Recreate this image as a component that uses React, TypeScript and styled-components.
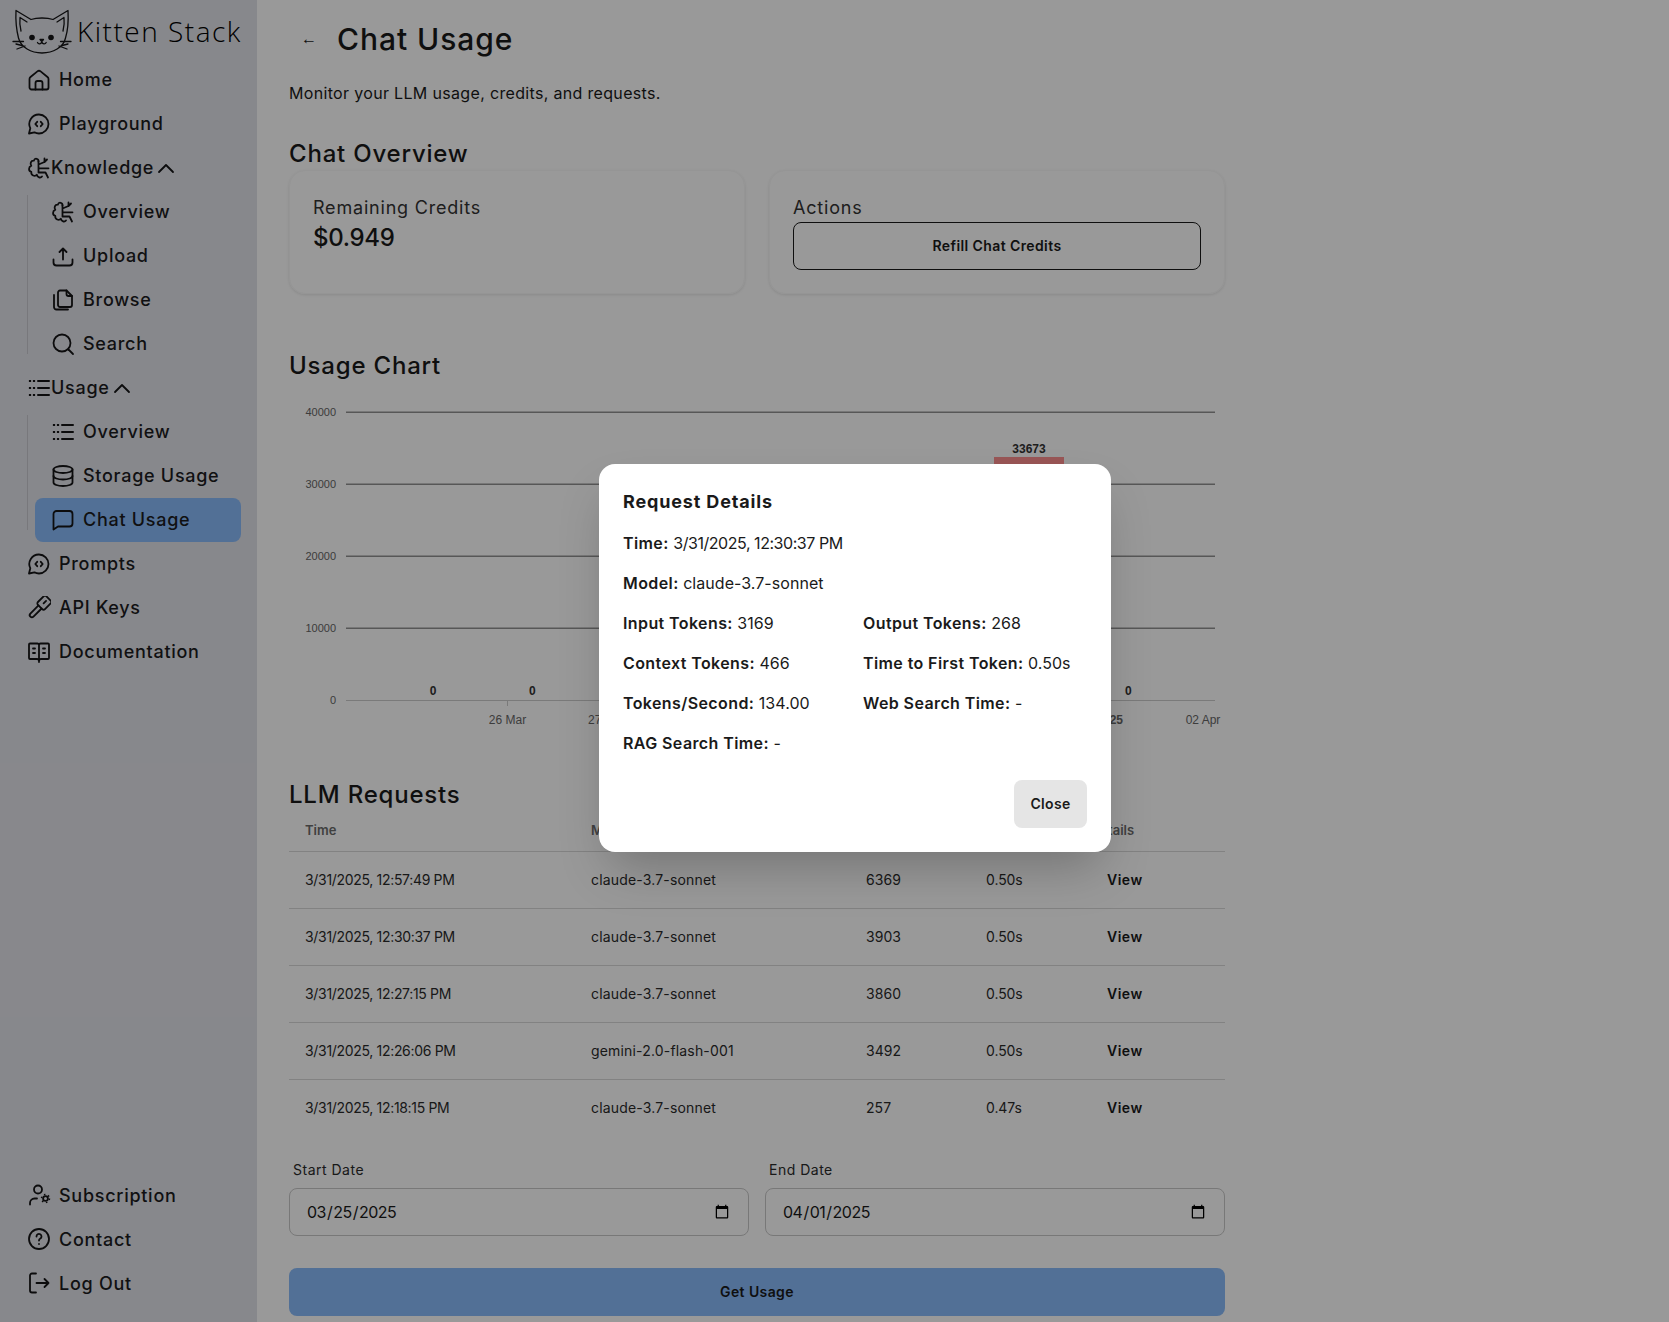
import React from "react";
import styled, { createGlobalStyle } from "styled-components";

const Global = createGlobalStyle`
  html, body { margin: 0; padding: 0; height: 1322px; overflow: hidden; background: #fff; }
  body { font-family: Inter, "Open Sans", "Liberation Sans", sans-serif; color: #1a1a1a; }
  * { box-sizing: border-box; }
`;

const Page = styled.div`
  display: flex;
  position: relative;
  width: 1669px;
  height: 1322px;
  overflow: hidden;
`;
const Sidebar = styled.aside`
  flex: 0 0 257px;
  width: 257px;
  min-width: 0;
  height: 1322px;
  background: #e2e3e9;
  display: flex;
  flex-direction: column;
  justify-content: space-between;
  padding: 0 16px 17px 11px;
`;
const Brand = styled.div`
  display: flex;
  align-items: flex-start;
  gap: 5px;
  height: 57.5px;
  padding: 9px 0 0 1px;
`;
const BrandName = styled.span`
  font-family: "Open Sans", sans-serif;
  font-size: 28px;
  font-weight: 300;
  line-height: 44px;
  letter-spacing: 1.5px;
  white-space: nowrap;
  color: #000;
`;
const NavList = styled.nav`
  display: flex;
  flex-direction: column;
`;
const NavItem = styled.a<{ $active?: boolean }>`
  display: flex;
  align-items: center;
  height: 44px;
  padding-left: 16px;
  gap: 8px;
  border-radius: 8px;
  font-size: 18px;
  font-weight: 500;
  letter-spacing: 0.72px;
  color: #1c1c1e;
  background: ${(p) => (p.$active ? "#89bbfa" : "transparent")};
  white-space: nowrap;
`;
const GroupHead = styled(NavItem)`
  gap: 0;
`;
const SubList = styled.div`
  display: flex;
  flex-direction: column;
  margin-left: 16px;
  padding-left: 8px;
  position: relative;
  &::before {
    content: "";
    position: absolute;
    left: 0;
    top: 5px;
    bottom: 12px;
    width: 1px;
    background: #c8c9cf;
  }
`;
const Main = styled.main`
  flex: 0 0 968px;
  padding: 0 0 0 32px;
`;
const HeaderRow = styled.header`
  display: flex;
  align-items: center;
  gap: 8px;
  height: 40px;
  margin-top: 19px;
`;
const BackButton = styled.button`
  width: 40px;
  height: 40px;
  padding: 0;
  border: 0;
  background: transparent;
  font: 700 16px "Liberation Sans", sans-serif;
  color: #1a1a1a;
  display: flex;
  align-items: center;
  justify-content: center;
`;
const Title = styled.h1`
  margin: 0;
  font-size: 30px;
  font-weight: 500;
  letter-spacing: 0.95px;
  line-height: 36px;
`;
const Subtitle = styled.p`
  margin: 22px 0 0;
  font-size: 16px;
  line-height: 24px;
  letter-spacing: 0.33px;
`;
const SectionTitle = styled.h2<{ $top: number }>`
  margin: ${(p) => p.$top}px 0 0;
  font-size: 24px;
  font-weight: 500;
  line-height: 32px;
  letter-spacing: 0.8px;
`;
const Cards = styled.div`
  display: grid;
  grid-template-columns: 456px 456px;
  gap: 24px;
`;
const Card = styled.section`
  height: 124px;
  padding: 24px 23px;
  border-radius: 16px;
  border: 1px solid #f8f8f8;
  box-shadow: 0 1px 3px rgba(0, 0, 0, 0.1);
`;
const CardLabel = styled.div`
  font-size: 18px;
  line-height: 28px;
  margin-top: -1px;
  letter-spacing: 0.8px;
  color: #333;
`;
const CardValue = styled.div`
  font-size: 24px;
  font-weight: 500;
  line-height: 32px;
  letter-spacing: -0.3px;
`;
const OutlineButton = styled.button`
  display: block;
  width: 408px;
  height: 48px;
  padding: 0 0 2px;
  background: transparent;
  border: 1px solid #1a1a1a;
  border-radius: 8px;
  font-family: inherit;
  font-size: 14px;
  font-weight: 600;
  letter-spacing: 0.4px;
  color: #1a1a1a;
`;
const ChartSvg = styled.svg`
  display: block;
  margin-top: 3px;
  width: 936px;
  height: 360px;
`;
const TickText = styled.text<{ $size?: number }>`
  font-family: "Liberation Sans", sans-serif;
  font-size: ${(p) => p.$size ?? 11}px;
  fill: #666;
`;
const ValueText = styled.text`
  font-family: "Liberation Sans", sans-serif;
  font-size: 12px;
  font-weight: 700;
  fill: #333;
  text-anchor: middle;
`;
const TableEl = styled.table`
  width: 936px;
  table-layout: fixed;
  border-collapse: collapse;
  font-size: 14px;
`;
const HeadCell = styled.th`
  height: 40px;
  padding: 0 16px 2px;
  text-align: left;
  font-size: 13px;
  font-weight: 600;
  letter-spacing: 0;
  color: #6b6b6b;
  border-bottom: 1px solid #d9d9d9;
`;
const Row = styled.tr`
  height: 57px;
  border-bottom: 1px solid #d9d9d9;
  &:last-child { border-bottom: 0; }
`;
const Cell = styled.td<{ $spacing: number }>`
  padding: 0 16px;
  white-space: nowrap;
  letter-spacing: ${(p) => p.$spacing}px;
  color: #2b2b2b;
`;
const ViewCell = styled.td`
  padding: 0 0 0 32px;
`;
const ViewLink = styled.span`
  font-weight: 600;
  letter-spacing: 0.5px;
  color: #1a1a1a;
`;
const DateGrid = styled.div`
  display: grid;
  grid-template-columns: 460px 460px;
  gap: 16px;
  margin-top: 24px;
`;
const Field = styled.label`
  display: flex;
  flex-direction: column;
`;
const FieldLabel = styled.span`
  font-size: 14px;
  line-height: 20px;
  letter-spacing: 0.5px;
  padding-left: 4px;
  margin-bottom: 8px;
  color: #2b2b2b;
`;
const DateInput = styled.input`
  height: 48px;
  padding: 0 16px;
  border: 1px solid #c9c9c9;
  border-radius: 8px;
  background: transparent;
  font-family: inherit;
  font-size: 16px;
  letter-spacing: -0.5px;
  color: #1a1a1a;
`;
const PrimaryButton = styled.button`
  display: block;
  width: 936px;
  height: 48px;
  margin-top: 32px;
  padding: 0 0 2px;
  border: 0;
  border-radius: 8px;
  background: #89bbfa;
  font-family: inherit;
  font-size: 14px;
  font-weight: 600;
  letter-spacing: 0.4px;
  color: #1a1a1a;
`;
const Overlay = styled.div`
  position: absolute;
  inset: 0;
  background: rgba(0, 0, 0, 0.4);
`;
const Modal = styled.div`
  position: absolute;
  left: 599px;
  top: 464px;
  width: 512px;
  height: 388px;
  padding: 24px;
  background: #fff;
  border-radius: 16px;
  box-shadow: 0 25px 50px -12px rgba(0, 0, 0, 0.25);
`;
const ModalTitle = styled.h3`
  margin: 0 0 15px;
  font-size: 18px;
  font-weight: 700;
  line-height: 28px;
  letter-spacing: 0.85px;
`;
const DetailGrid = styled.dl`
  display: grid;
  grid-template-columns: 224px 224px;
  gap: 16px;
  margin: 0;
`;
const Detail = styled.div<{ $wide?: boolean }>`
  grid-column: ${(p) => (p.$wide ? "1 / 3" : "auto")};
  font-size: 16px;
  line-height: 24px;
  white-space: nowrap;
`;
const DetailKey = styled.b`
  font-weight: 600;
  letter-spacing: 0.4px;
`;
const DetailValue = styled.span<{ $tight?: boolean }>`
  letter-spacing: ${(p) => (p.$tight ? "-0.45px" : "0.05px")};
`;
const ModalActions = styled.div`
  display: flex;
  justify-content: flex-end;
  margin-top: 25px;
`;
const CloseButton = styled.button`
  width: 73px;
  height: 48px;
  padding: 0 0 2px;
  border: 0;
  border-radius: 8px;
  background: #e5e5e5;
  font-family: inherit;
  font-size: 14px;
  font-weight: 600;
  letter-spacing: 0.3px;
  color: #1a1a1a;
`;

const IconSvg = styled.svg`
  flex: 0 0 24px;
  width: 24px;
  height: 24px;
  fill: none;
  stroke: #141416;
  stroke-width: 1.8;
  stroke-linecap: round;
  stroke-linejoin: round;
`;
const I = ({ children }: { children: React.ReactNode }) => <IconSvg viewBox="0 0 24 24">{children}</IconSvg>;

const HomeIcon = () => (
  <I>
    <path d="M2.500 19.500V11c0-.8.4-1.500 1-2l6.900-5.600a2.600 2.600 0 0 1 3.200 0L20.500 9c.6.5 1 1.200 1 2v8.500a2 2 0 0 1-2 2h-15a2 2 0 0 1-2-2Z" />
    <path d="M8.500 21.500V15a2 2 0 0 1 2-2h3a2 2 0 0 1 2 2v6.500" />
  </I>
);
const ChatCodeIcon = () => (
  <I>
    <path d="M12 2.500a9.500 9.500 0 0 1 0 19c-1.700 0-3.300-.4-4.600-1.200L2 21.500l1.300-5.300A9.500 9.500 0 0 1 12 2.500Z" />
    <path d="M10.200 9.800 8.300 12l1.900 2.200M13.800 9.800l1.900 2.200-1.900 2.200" />
  </I>
);
const BrainIcon = () => (
  <I>
    <path d="M11.500 5.500C11.800 2.500 7.800 1.500 6.800 4.700 3.800 4.500 2.800 7.800 4.300 9.700 1.300 11 1.300 15.300 4.300 16 3.800 19.500 8 21 9.800 18.800c.7 2.700 3.700 3.500 5.200 1.700" />
    <path d="M11.500 5.500V16.500M11.500 8.500 17.500 6V2.500M20 3.500 17.500 6M11.500 12.300H21.500M11.500 16.500H18.500L21 21.500" />
  </I>
);
const UploadIcon = () => (
  <I>
    <path d="M12 15.500V4.500M8.500 8 12 4.500 15.500 8" />
    <path d="M2.500 15.500v3a3 3 0 0 0 3 3h13a3 3 0 0 0 3-3v-3" />
  </I>
);
const FilesIcon = () => (
  <I>
    <path d="M7 5V4.500a2 2 0 0 1 2-2h6.500L21 8v9a2 2 0 0 1-2 2H9a2 2 0 0 1-2-2V5Z" />
    <path d="M15.500 2.500V6a2 2 0 0 0 2 2H21" />
    <path d="M3 7v12a2.500 2.500 0 0 0 2.500 2.500H17" />
  </I>
);
const SearchIcon = () => (
  <I>
    <circle cx="11" cy="11" r="8.500" />
    <path d="M17.500 17.500 22 22" />
  </I>
);
const ListIcon = () => (
  <I>
    <path d="M3 5h.01M7 5h.01M3 12h.01M7 12h.01M3 19h.01M7 19h.01" strokeWidth="2.200" strokeLinecap="square" />
    <path d="M11 5h11M11 12h11M11 19h11" strokeWidth="2" />
  </I>
);
const DatabaseIcon = () => (
  <I>
    <ellipse cx="12" cy="5.500" rx="9.500" ry="3.500" />
    <path d="M2.500 5.500v13c0 2 4.200 3.500 9.500 3.500s9.500-1.500 9.500-3.500v-13" />
    <path d="M2.500 12c0 2 4.200 3.500 9.500 3.500s9.500-1.500 9.500-3.500" />
  </I>
);
const MessageIcon = () => (
  <I>
    <path d="M2.500 21.500V6a3 3 0 0 1 3-3h13a3 3 0 0 1 3 3v9.500a3 3 0 0 1-3 3H7Z" />
  </I>
);
const KeyIcon = () => (
  <I>
    <g transform="rotate(45 12 12)">
      <rect x="7" y="-1.500" width="10" height="12" rx="2" />
      <path d="M12 2v3.500" />
      <path d="M9.800 10.500v11.500a2.200 2.200 0 0 0 4.400 0V10.500" />
    </g>
  </I>
);
const BookIcon = () => (
  <I>
    <path d="M12 5v17M12 5c0-1-.8-1.500-1.500-1.500H3a1 1 0 0 0-1 1V18a1 1 0 0 0 1 1h7c1.200 0 2 .8 2 2 0-1.200.8-2 2-2h7a1 1 0 0 0 1-1V4.500a1 1 0 0 0-1-1h-7.500C12.800 3.500 12 4 12 5Z" />
    <path d="M6 8.500h2M6 13h2M16 8.500h2M16 13h2" />
  </I>
);
const UserCogIcon = () => (
  <I>
    <circle cx="11" cy="6.500" r="4" />
    <path d="M3 21.500v-1.500c0-2.500 2-4.500 4.500-4.500H10" />
    <circle cx="18.500" cy="15.500" r="2.400" strokeWidth="1.800" />
    <circle cx="18.500" cy="15.500" r="4" strokeWidth="1.500" strokeDasharray="1.500 2.700" strokeLinecap="butt" />
  </I>
);
const HelpIcon = () => (
  <I>
    <circle cx="12" cy="12" r="10" />
    <path d="M9.500 9.500a2.500 2.500 0 1 1 3.800 2.100c-.8.500-1.300 1-1.300 1.900M12 17h.01" />
  </I>
);
const LogOutIcon = () => (
  <I>
    <path d="M9 2.500H5a2 2 0 0 0-2 2v15a2 2 0 0 0 2 2h4" />
    <path d="M9.500 12H21.500M17.500 8l4 4-4 4" />
  </I>
);
const ChevronUpIcon = () => (
  <I>
    <path d="M5 16 12 9l7 7" />
  </I>
);

const CatSvg = styled.svg`
  flex: 0 0 60px;
  width: 60px;
  height: 46px;
  fill: none;
  stroke: #141416;
  stroke-width: 1.3;
  stroke-linecap: round;
  stroke-linejoin: round;
`;
const CatLogo = () => (
  <CatSvg viewBox="11 9 60 46">
    <path d="M15 10.500 30 19.500C36 17.500 46 17.500 52 19.500L67 10.500C67.500 20 67 30 64.500 38 62.500 47.500 52 53 41 53 30 53 20 47.500 17.500 38 15.500 30 14.500 20 15 10.500Z" />
    <path d="M19 17.500 26 22M19 17.500C18.500 22 19 27 20 31M63 17.500 56 22M63 17.500C63.500 22 63 27 62 31" />
    <path d="M12 41.500H22.500M59.500 41.500H70M16 49 24 46M21 45.500 15 44M66 49 58 46M61 45.500 67 44" />
    <circle cx="31" cy="37.500" r="2.800" fill="#141416" stroke="none" />
    <circle cx="50" cy="37.500" r="2.800" fill="#141416" stroke="none" />
    <path d="M39 39.500h3.500L40.800 41.500ZM36.500 42.500c.8 1.800 3.400 1.800 4.300-.6.900 2.400 3.500 2.400 4.400.6" />
  </CatSvg>
);

type NavEntry = { label: string; icon: React.ReactNode; active?: boolean };

const topItems: NavEntry[] = [
  { label: "Home", icon: <HomeIcon /> },
  { label: "Playground", icon: <ChatCodeIcon /> },
];
const knowledgeItems: NavEntry[] = [
  { label: "Overview", icon: <BrainIcon /> },
  { label: "Upload", icon: <UploadIcon /> },
  { label: "Browse", icon: <FilesIcon /> },
  { label: "Search", icon: <SearchIcon /> },
];
const usageItems: NavEntry[] = [
  { label: "Overview", icon: <ListIcon /> },
  { label: "Storage Usage", icon: <DatabaseIcon /> },
  { label: "Chat Usage", icon: <MessageIcon />, active: true },
];
const lowerItems: NavEntry[] = [
  { label: "Prompts", icon: <ChatCodeIcon /> },
  { label: "API Keys", icon: <KeyIcon /> },
  { label: "Documentation", icon: <BookIcon /> },
];
const bottomItems: NavEntry[] = [
  { label: "Subscription", icon: <UserCogIcon /> },
  { label: "Contact", icon: <HelpIcon /> },
  { label: "Log Out", icon: <LogOutIcon /> },
];

const renderItems = (items: NavEntry[]) =>
  items.map((it) => (
    <NavItem key={it.label} $active={it.active}>
      {it.icon}
      {it.label}
    </NavItem>
  ));

const requests = [
  ["3/31/2025, 12:57:49 PM", "claude-3.7-sonnet", "6369", "0.50s"],
  ["3/31/2025, 12:30:37 PM", "claude-3.7-sonnet", "3903", "0.50s"],
  ["3/31/2025, 12:27:15 PM", "claude-3.7-sonnet", "3860", "0.50s"],
  ["3/31/2025, 12:26:06 PM", "gemini-2.0-flash-001", "3492", "0.50s"],
  ["3/31/2025, 12:18:15 PM", "claude-3.7-sonnet", "257", "0.47s"],
];
const columnSpacing = [-0.32, 0.17, 0.05, -0.09];

const details: { k: string; v: string; wide?: boolean; tight?: boolean }[] = [
  { k: "Time:", v: "3/31/2025, 12:30:37 PM", wide: true, tight: true },
  { k: "Model:", v: "claude-3.7-sonnet", wide: true },
  { k: "Input Tokens:", v: "3169" },
  { k: "Output Tokens:", v: "268" },
  { k: "Context Tokens:", v: "466" },
  { k: "Time to First Token:", v: "0.50s" },
  { k: "Tokens/Second:", v: "134.00" },
  { k: "Web Search Time:", v: "-" },
  { k: "RAG Search Time:", v: "-" },
];

/* chart origin on the page: x 289, y 385 */
const gridY = [
  { y: 27, label: "40000" },
  { y: 99, label: "30000" },
  { y: 171, label: "20000" },
  { y: 243, label: "10000" },
];
const zeroBars = [144, 243.3, 839.3];
const ticks = ["26 Mar", "27 Mar"];

const UsageChart = () => (
  <ChartSvg viewBox="0 0 936 360">
    {gridY.map((g) => (
      <g key={g.label}>
        <line x1="57" x2="926" y1={g.y + 0.25} y2={g.y + 0.25} stroke="#929292" strokeWidth="1.500" />
        <TickText x="47" y={g.y + 4} textAnchor="end">{g.label}</TickText>
      </g>
    ))}
    <line x1="57" x2="926" y1="315.500" y2="315.500" stroke="#ccc" />
    <TickText x="47" y="319" textAnchor="end">0</TickText>
    {zeroBars.map((x) => (
      <ValueText key={x} x={x} y="310">0</ValueText>
    ))}
    <rect x="705" y="72" width="70" height="243" fill="#ff9090" />
    <ValueText x="740" y="68">33673</ValueText>
    {ticks.map((t, i) => (
      <g key={t}>
        <line x1={218.500 + i * 99.3} x2={218.500 + i * 99.3} y1="316" y2="321" stroke="#ccc" />
        <TickText $size={12} x={218.500 + i * 99.3} y="339" textAnchor="middle">{t}</TickText>
      </g>
    ))}
    <TickText $size={12} x="834" y="339" textAnchor="end" fontWeight="700">Apr 2025</TickText>
    <TickText $size={12} x="914" y="339" textAnchor="middle">02 Apr</TickText>
  </ChartSvg>
);

export default function App() {
  return (
    <Page>
      <Global />
      <Sidebar>
        <div>
          <Brand>
            <CatLogo />
            <BrandName>Kitten Stack</BrandName>
          </Brand>
          <NavList>
            {renderItems(topItems)}
            <GroupHead>
              <BrainIcon />
              Knowledge
              <ChevronUpIcon />
            </GroupHead>
            <SubList>{renderItems(knowledgeItems)}</SubList>
            <GroupHead>
              <ListIcon />
              Usage
              <ChevronUpIcon />
            </GroupHead>
            <SubList>{renderItems(usageItems)}</SubList>
            {renderItems(lowerItems)}
          </NavList>
        </div>
        <NavList>{renderItems(bottomItems)}</NavList>
      </Sidebar>
      <Main>
        <HeaderRow>
          <BackButton>←</BackButton>
          <Title>Chat Usage</Title>
        </HeaderRow>
        <Subtitle>Monitor your LLM usage, credits, and requests.</Subtitle>
        <SectionTitle $top={33}>Chat Overview</SectionTitle>
        <Cards>
          <Card>
            <CardLabel>Remaining Credits</CardLabel>
            <CardValue>$0.949</CardValue>
          </Card>
          <Card>
            <CardLabel>Actions</CardLabel>
            <OutlineButton>Refill Chat Credits</OutlineButton>
          </Card>
        </Cards>
        <SectionTitle $top={56}>Usage Chart</SectionTitle>
        <UsageChart />
        <SectionTitle $top={34}>LLM Requests</SectionTitle>
        <TableEl>
          <colgroup>
            <col width="286" />
            <col width="275" />
            <col width="120" />
            <col width="105" />
            <col width="150" />
          </colgroup>
          <thead>
            <tr>
              <HeadCell>Time</HeadCell>
              <HeadCell>Model</HeadCell>
              <HeadCell />
              <HeadCell />
              <HeadCell>Details</HeadCell>
            </tr>
          </thead>
          <tbody>
            {requests.map((r) => (
              <Row key={r[0]}>
                {r.map((c, i) => (
                  <Cell key={i} $spacing={columnSpacing[i]}>{c}</Cell>
                ))}
                <ViewCell>
                  <ViewLink>View</ViewLink>
                </ViewCell>
              </Row>
            ))}
          </tbody>
        </TableEl>
        <DateGrid>
          <Field>
            <FieldLabel>Start Date</FieldLabel>
            <DateInput type="date" defaultValue="2025-03-25" />
          </Field>
          <Field>
            <FieldLabel>End Date</FieldLabel>
            <DateInput type="date" defaultValue="2025-04-01" />
          </Field>
        </DateGrid>
        <PrimaryButton>Get Usage</PrimaryButton>
      </Main>
      <Overlay />
      <Modal>
        <ModalTitle>Request Details</ModalTitle>
        <DetailGrid>
          {details.map((d) => (
            <Detail key={d.k} $wide={d.wide}>
              <DetailKey>{d.k}</DetailKey> <DetailValue $tight={d.tight}>{d.v}</DetailValue>
            </Detail>
          ))}
        </DetailGrid>
        <ModalActions>
          <CloseButton>Close</CloseButton>
        </ModalActions>
      </Modal>
    </Page>
  );
}
